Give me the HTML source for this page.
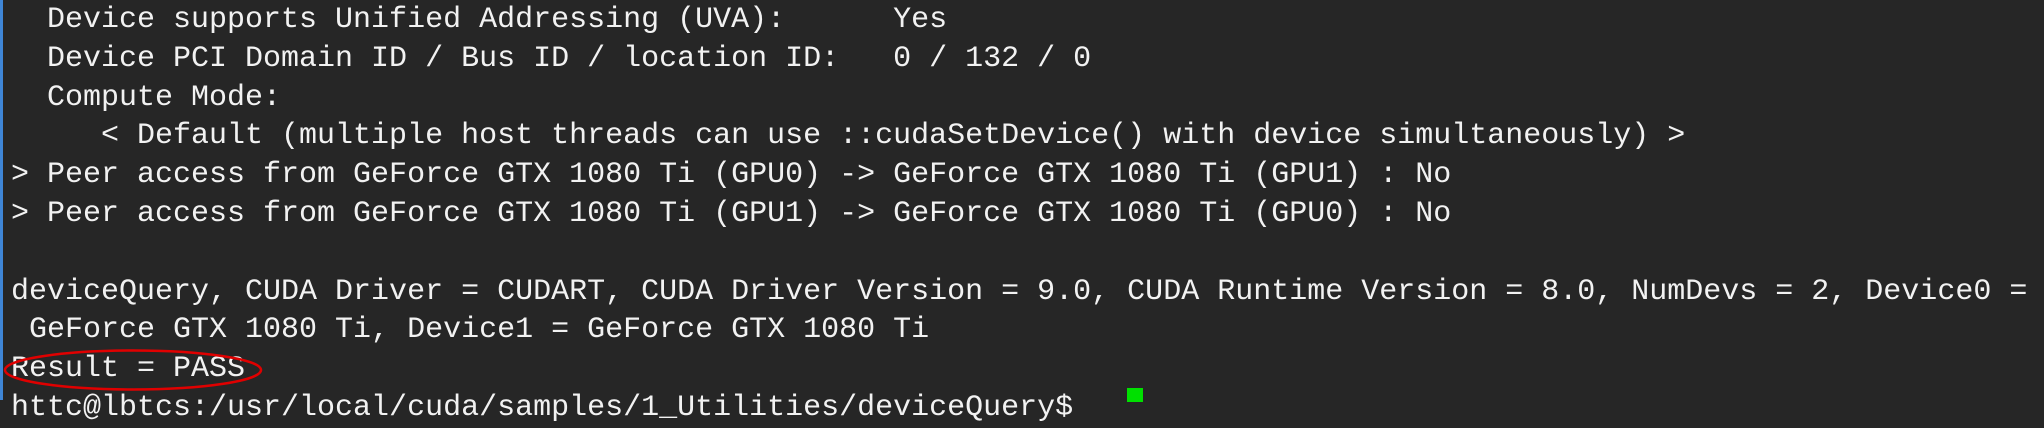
<!DOCTYPE html>
<html><head><meta charset="utf-8"><style>
html,body{margin:0;padding:0;}
body{width:2044px;height:400px;overflow:hidden;background:#262626;position:relative;}
.bl{position:absolute;left:0;top:0;width:3px;height:400px;background:#3f86d6;}
pre{position:absolute;left:11px;top:0;margin:0;font-family:"Liberation Mono",monospace;font-size:30px;line-height:38.8px;color:#f2f2f2;white-space:pre;padding-top:1px;}
.cur{position:absolute;left:1127px;top:388px;width:16px;height:14px;background:#00e000;}
svg{position:absolute;left:0;top:0;}
</style></head><body>
<div class="bl"></div>
<pre>  Device supports Unified Addressing (UVA):      Yes
  Device PCI Domain ID / Bus ID / location ID:   0 / 132 / 0
  Compute Mode:
     &lt; Default (multiple host threads can use ::cudaSetDevice() with device simultaneously) &gt;
&gt; Peer access from GeForce GTX 1080 Ti (GPU0) -&gt; GeForce GTX 1080 Ti (GPU1) : No
&gt; Peer access from GeForce GTX 1080 Ti (GPU1) -&gt; GeForce GTX 1080 Ti (GPU0) : No

deviceQuery, CUDA Driver = CUDART, CUDA Driver Version = 9.0, CUDA Runtime Version = 8.0, NumDevs = 2, Device0 =
 GeForce GTX 1080 Ti, Device1 = GeForce GTX 1080 Ti
Result = PASS
httc@lbtcs:/usr/local/cuda/samples/1_Utilities/deviceQuery$</pre>
<div class="cur"></div>
<svg width="2044" height="400"><ellipse cx="133" cy="370" rx="128" ry="19.5" fill="none" stroke="#e00000" stroke-width="2.5"/></svg>
</body></html>
